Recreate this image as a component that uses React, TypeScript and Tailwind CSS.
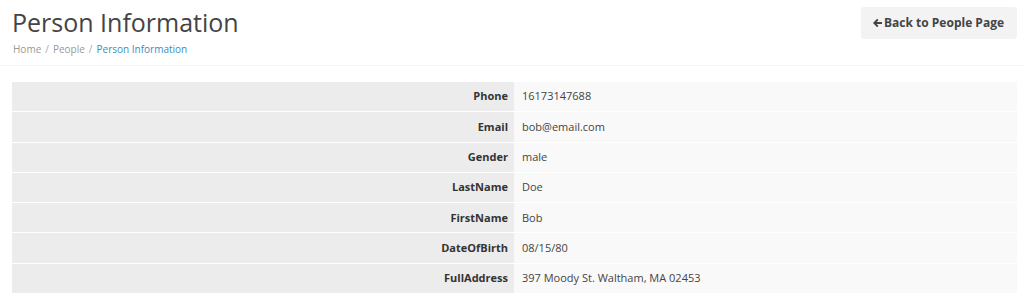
import React from "react";

const rows: [string, string][] = [
  ["Phone", "16173147688"],
  ["Email", "bob@email.com"],
  ["Gender", "male"],
  ["LastName", "Doe"],
  ["FirstName", "Bob"],
  ["DateOfBirth", "08/15/80"],
  ["FullAddress", "397 Moody St. Waltham, MA 02453"],
];

export default function App() {
  return (
    <div className="w-[1024px] h-[298px] bg-white text-[#333] overflow-hidden" style={{ fontFamily: '"Open Sans", sans-serif' }}>
      <div className="flex items-start justify-between border-b border-[#f4f4f4] px-[12px] h-[66px]">
        <div className="pt-[4px]">
          <h1 className="text-[25px] leading-[36px] font-normal text-[#444]">Person Information</h1>
          <div className="flex items-center gap-[4px] text-[10px] leading-[16px] mt-[1px] pl-[1px] text-[#999]">
            <span>Home</span>
            <span className="text-[#aaa]">/</span>
            <span>People</span>
            <span className="text-[#aaa]">/</span>
            <span className="text-[#3c8dbc]">Person Information</span>
          </div>
        </div>
        <button className="mt-[7px] mr-[-5px] h-[32px] pl-[12px] pr-[13px] flex items-center gap-[2px] bg-[#f3f3f3] rounded-[3px] text-[12px] font-bold text-[#444]">
          <svg width="9" height="10" viewBox="0 0 10 10" fill="currentColor">
            <path d="M0 5 L4.6 0.4 L6.1 1.9 L3.9 4 H10 V6 H3.9 L6.1 8.1 L4.6 9.6 Z" />
          </svg>
          <span>Back to People Page</span>
        </button>
      </div>
      <div className="px-[12px] pt-[16px] pr-[7px]">
        <div className="flex flex-col gap-[1px]">
          {rows.map(([k, v]) => (
            <div key={k} className="flex h-[29.3px] text-[11px]">
              <div className="w-[502px] bg-[#ececec] flex items-center justify-end pr-[6px] font-bold text-[#333]">{k}</div>
              <div className="flex-1 bg-[#f9f9f9] flex items-center pl-[8px] text-[#444]">{v}</div>
            </div>
          ))}
        </div>
      </div>
    </div>
  );
}
